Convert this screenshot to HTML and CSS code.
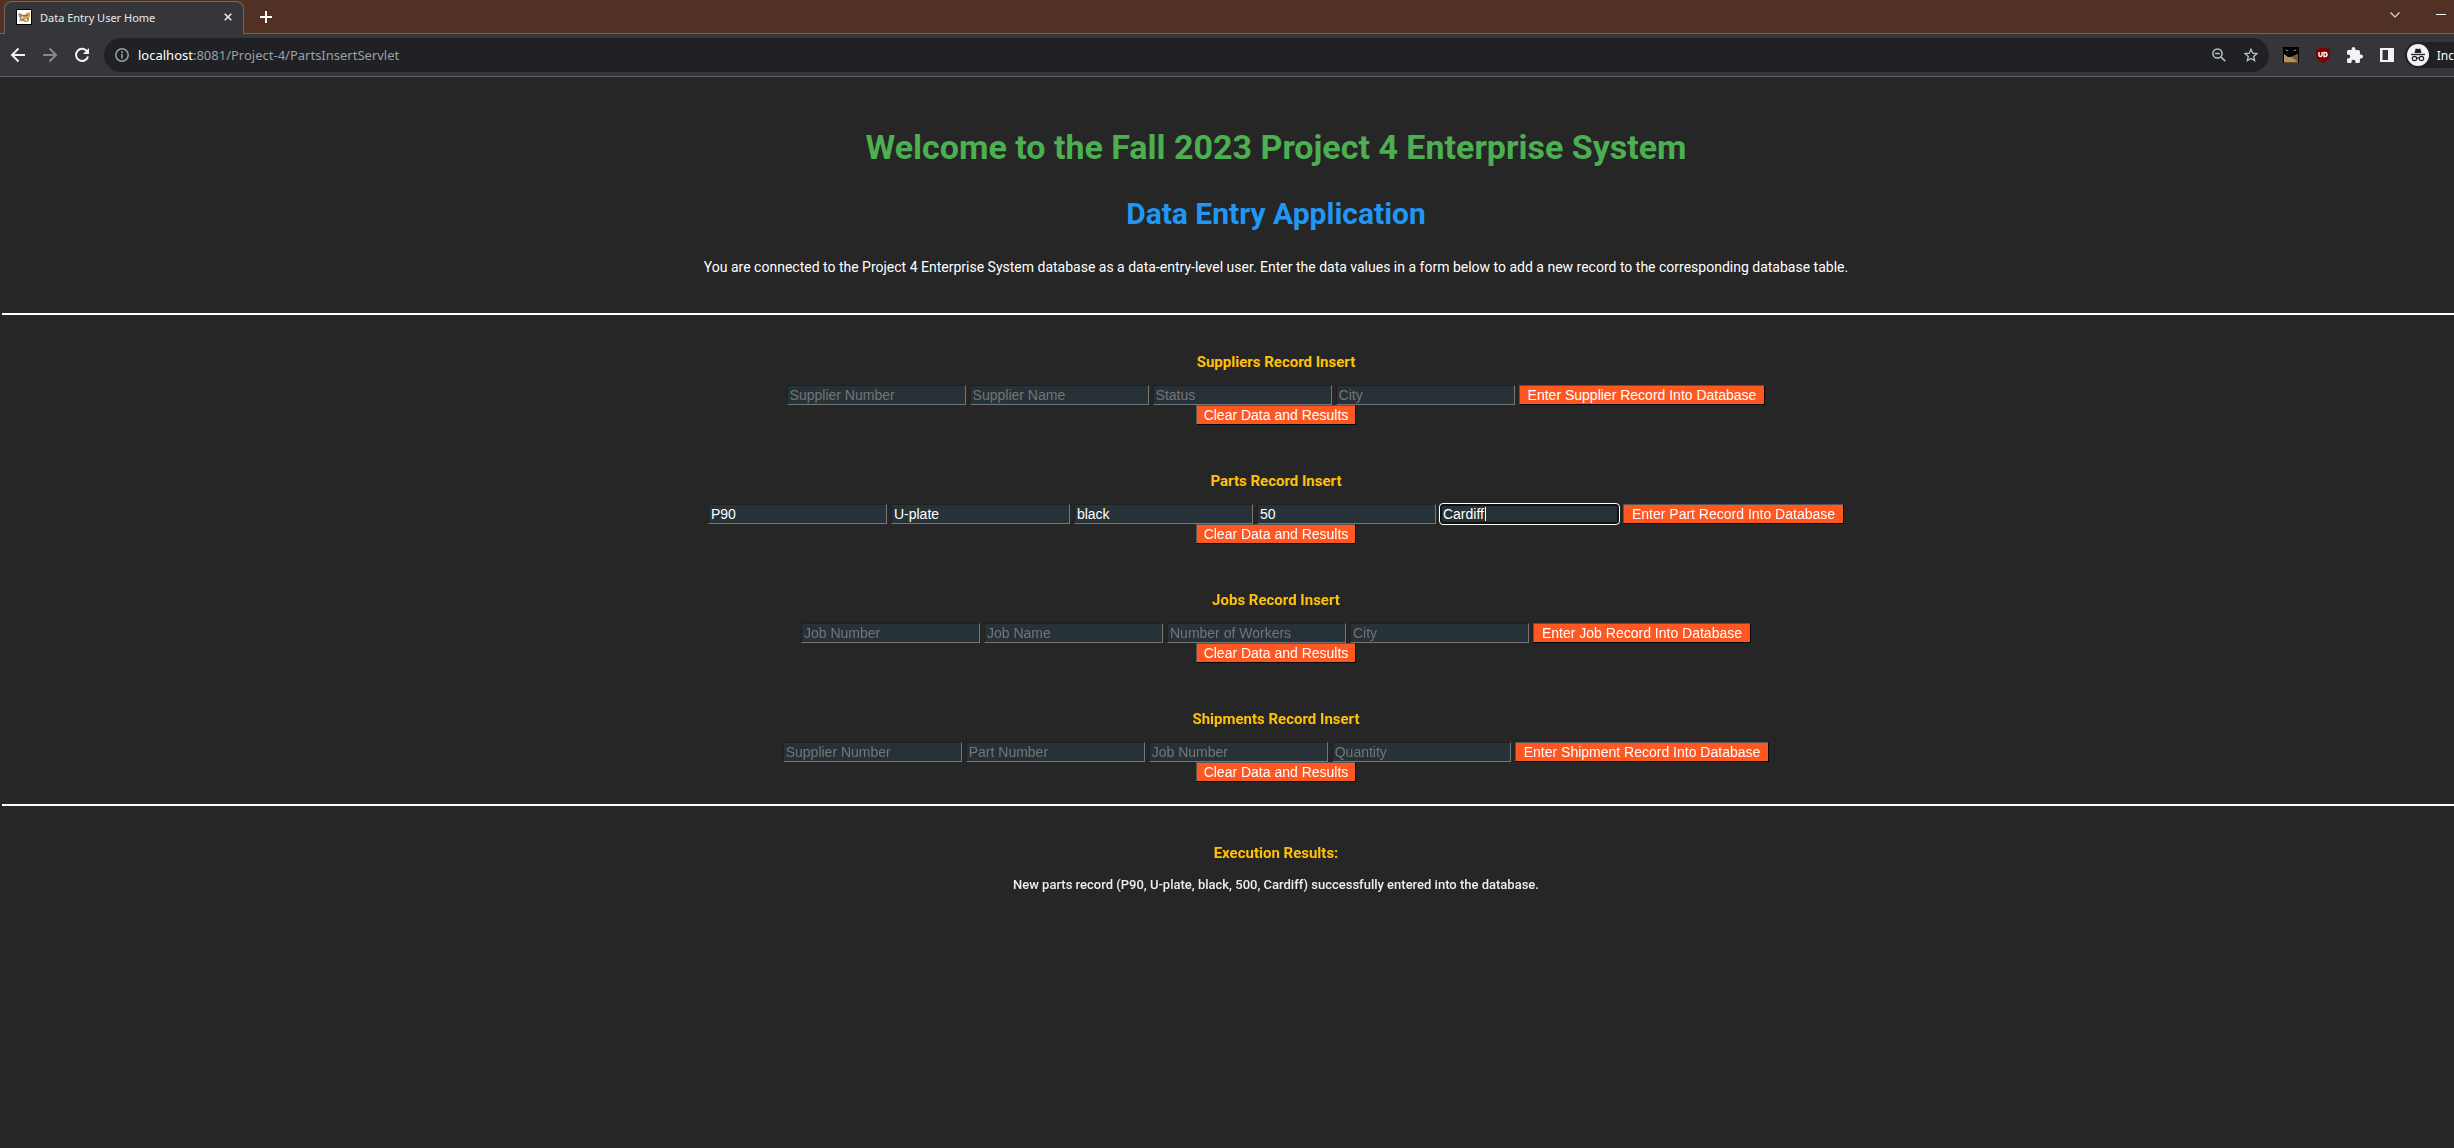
FILE: index.html
```html
<!DOCTYPE html>
<html lang="en">
<head>
<meta charset="utf-8">
<title>Data Entry User Home</title>
<link rel="stylesheet" href="styles.css">
</head>
<body>
<header class="browser">
  <div class="tabstrip">
    <div class="tab">
      <svg class="favicon" viewBox="0 0 16 16" aria-hidden="true">
        <rect x=".5" y=".5" width="15" height="15" fill="#fff" stroke="#000"/>
        <path d="M2 5l3-1 2 3-2 2 4 2 4 2H9L6 11l-3 2 1-3z" fill="#9a938a"/>
        <path d="M7 6l3-1 1-2 1 1 2-1v4l-1 2v3l-3-2-4 2-2-1 3-2z" fill="#d9a441"/>
        <path d="M6 6l3 1 3-1M5 11h3M12 9v3" stroke="#5c4a2a" fill="none" stroke-width=".7"/>
      </svg>
      <span class="tab-title">Data Entry User Home</span>
      <button class="tab-close" aria-label="Close tab"><svg viewBox="0 0 8 8"><path d="M.7.7l6.6 6.6M7.3.7L.7 7.3" stroke="#e8eaed" stroke-width="1.6"/></svg></button>
    </div>
    <button class="new-tab" aria-label="New tab"><svg viewBox="0 0 12 12"><path d="M6 0v12M0 6h12" stroke="#fff" stroke-width="2"/></svg></button>
    <div class="window-controls">
      <button aria-label="Search tabs"><svg width="10" height="6" viewBox="0 0 10 6"><path d="M.5.5L5 5 9.500.5" fill="none" stroke="#e8e0dc" stroke-width="1.1"/></svg></button>
      <button aria-label="Minimize"><svg width="10" height="2" viewBox="0 0 10 2"><path d="M0 .5h10" stroke="#fff"/></svg></button>
    </div>
  </div>
  <div class="toolbar">
    <nav class="nav-buttons">
      <button aria-label="Back"><svg width="16" height="16" viewBox="0 0 16 16"><path d="M15 8H2M8.500 1.500L2 8l6.500 6.500" fill="none" stroke="#f1f3f4" stroke-width="2"/></svg></button>
      <button aria-label="Forward"><svg width="16" height="16" viewBox="0 0 16 16"><path d="M1 8h13M7.500 1.500L14 8l-6.500 6.500" fill="none" stroke="#86888a" stroke-width="2"/></svg></button>
      <button aria-label="Reload"><svg width="16" height="16" viewBox="0 0 16 16"><path d="M13.200 4.500A6.100 6.100 0 1 0 14 9.500" fill="none" stroke="#f1f3f4" stroke-width="2"/><path d="M15 1v6H9z" fill="#f1f3f4"/></svg></button>
    </nav>
    <div class="omnibox">
      <svg width="14" height="14" viewBox="0 0 14 14"><circle cx="7" cy="7" r="6.200" fill="none" stroke="#9aa0a6" stroke-width="1.500"/><path d="M7 6v4.500M7 3.300v1.600" stroke="#9aa0a6" stroke-width="1.600"/></svg>
      <span class="url"><span class="url-host">localhost</span>:8081/Project-4/PartsInsertServlet</span>
      <button aria-label="Zoom"><svg width="14" height="14" viewBox="0 0 14 14"><circle cx="5.500" cy="5.500" r="4.600" fill="none" stroke="#bdc1c6" stroke-width="1.500"/><path d="M3.200 5.500h4.600M9 9l4.300 4.300" stroke="#bdc1c6" stroke-width="1.600"/></svg></button>
      <button aria-label="Bookmark"><svg width="14" height="14" viewBox="0 0 14 14"><path d="M7 1.300l1.700 3.900 4.200.4-3.200 2.800 1 4.200L7 10.400l-3.700 2.200 1-4.200L1.100 5.600l4.200-.4z" fill="none" stroke="#bdc1c6" stroke-width="1.300"/></svg></button>
    </div>
    <div class="extensions">
      <button aria-label="Dark mode"><svg width="16" height="16" viewBox="0 0 16 16"><path d="M0 0h16v16H0z" fill="#000"/><path d="M1 7l4 3h3l7-3v8.500H1z" fill="#b3925f"/><path d="M8 10l7-3v8z" fill="#6f5838"/><path d="M2 2l4 2H4zM14 2l-4 2h2z" fill="#c8cdd2"/></svg></button>
      <button aria-label="Ad blocker"><svg width="16" height="16" viewBox="0 0 16 16"><path d="M8 0c2 1.300 4 2 7 2v6c0 4-3 6-7 8-4-2-7-4-7-8V2c3 0 5-.7 7-2z" fill="#800000"/><path d="M4 5v3a1.500 1.500 0 0 0 3 0V5" fill="none" stroke="#fff" stroke-width="1.400"/><path d="M9 5.500v4h1a2 2 0 0 0 0-4z" fill="none" stroke="#fff" stroke-width="1.400"/></svg></button>
      <button aria-label="Extensions"><svg width="16" height="16" viewBox="2 1 21 21"><path d="M20.500 11H19V7a2 2 0 0 0-2-2h-4V3.500a2.500 2.500 0 0 0-5 0V5H4a2 2 0 0 0-2 2v3.800h1.500a2.700 2.700 0 0 1 0 5.400H2V20a2 2 0 0 0 2 2h3.800v-1.500a2.700 2.700 0 0 1 5.400 0V22H17a2 2 0 0 0 2-2v-4h1.500a2.500 2.500 0 0 0 0-5z" fill="#f1f3f4"/></svg></button>
      <button aria-label="Side panel"><svg width="16" height="16" viewBox="0 0 16 16"><path d="M1 1h14v14H1zM3.500 3v10H9V3z" fill="#f1f3f4" fill-rule="evenodd"/></svg></button>
    </div>
    <button class="incognito">
      <svg width="22" height="22" viewBox="0 0 22 22"><circle cx="11" cy="11" r="11" fill="#f1f3f4"/><path d="M7.500 9l1.200-4.500 2.300.6 2.300-.6L14.500 9z" fill="#202124"/><path d="M4 10.500h14" stroke="#202124" stroke-width="1.300"/><g fill="none" stroke="#202124" stroke-width="1.200"><circle cx="7.500" cy="14.500" r="2.200"/><circle cx="14.500" cy="14.500" r="2.200"/><path d="M9.700 14.200q1.300-.8 2.600 0"/></g></svg>
      <span>Inc</span>
    </button>
  </div>
</header>
<main class="page">
  <h1>Welcome to the Fall 2023 Project 4 Enterprise System</h1>
  <h2>Data Entry Application</h2>
  <p class="intro">You are connected to the Project 4 Enterprise System database as a data-entry-level user. Enter the data values in a form below to add a new record to the corresponding database table.</p>
  <hr>
  <form class="record">
    <h3>Suppliers Record Insert</h3>
    <div class="fields">
      <input type="text" aria-label="Supplier Number" placeholder="Supplier Number">
      <input type="text" aria-label="Supplier Name" placeholder="Supplier Name">
      <input type="text" aria-label="Status" placeholder="Status">
      <input type="text" aria-label="City" placeholder="City">
      <button type="submit">Enter Supplier Record Into Database</button>
    </div>
    <button type="reset">Clear Data and Results</button>
  </form>
  <form class="record">
    <h3>Parts Record Insert</h3>
    <div class="fields">
      <input type="text" aria-label="Part Number" value="P90">
      <input type="text" aria-label="Part Name" value="U-plate">
      <input type="text" aria-label="Color" value="black">
      <input type="text" aria-label="Weight" value="50">
      <input type="text" aria-label="City" value="Cardiff" autofocus>
      <button type="submit">Enter Part Record Into Database</button>
    </div>
    <button type="reset">Clear Data and Results</button>
  </form>
  <form class="record">
    <h3>Jobs Record Insert</h3>
    <div class="fields">
      <input type="text" aria-label="Job Number" placeholder="Job Number">
      <input type="text" aria-label="Job Name" placeholder="Job Name">
      <input type="text" aria-label="Number of Workers" placeholder="Number of Workers">
      <input type="text" aria-label="City" placeholder="City">
      <button type="submit">Enter Job Record Into Database</button>
    </div>
    <button type="reset">Clear Data and Results</button>
  </form>
  <form class="record">
    <h3>Shipments Record Insert</h3>
    <div class="fields">
      <input type="text" aria-label="Supplier Number" placeholder="Supplier Number">
      <input type="text" aria-label="Part Number" placeholder="Part Number">
      <input type="text" aria-label="Job Number" placeholder="Job Number">
      <input type="text" aria-label="Quantity" placeholder="Quantity">
      <button type="submit">Enter Shipment Record Into Database</button>
    </div>
    <button type="reset">Clear Data and Results</button>
  </form>
  <hr>
  <section class="results">
    <h3>Execution Results:</h3>
    <p>New parts record (P90, U-plate, black, 500, Cardiff) successfully entered into the database.</p>
  </section>
</main>
</body>
</html>
```
FILE: styles.css
```css
* { box-sizing: border-box; }
body {
  margin: 0;
  min-height: 100vh;
  background: #262626;
  color: #fff;
  font-family: Roboto, sans-serif;
  overflow: hidden;
}
svg { display: block; }

/* Browser chrome */
.browser { font-family: "Noto Sans", "Open Sans", sans-serif; }
.browser button { background: none; border: 0; padding: 0; color: inherit; font: inherit; }
.tabstrip {
  display: flex;
  height: 34px;
  padding: 1px 0 0 4px;
  background: #523125;
  border-bottom: 1px solid #75625a;
}
.tab {
  display: flex;
  align-items: center;
  width: 240px;
  height: 33px;
  margin-bottom: -1px;
  padding: 0 11px 2px;
  background: #35363a;
  border: 1px solid #806459;
  border-bottom: 0;
  border-radius: 8px 8px 0 0;
  flex: none;
}
.favicon { width: 16px; height: 16px; }
.tab-title { flex: 1; margin-left: 8px; font-size: 11px; color: #e8eaed; white-space: nowrap; }
.tab-close svg { width: 8px; height: 8px; }
.new-tab { margin-left: 16px; }
.new-tab svg { width: 12px; height: 12px; }
.window-controls { display: flex; align-items: center; gap: 36px; margin-left: auto; padding: 0 8px 4px 0; }
.toolbar {
  display: flex;
  align-items: center;
  height: 43px;
  padding-left: 10px;
  background: #35363a;
  border-bottom: 1px solid #5f6064;
}
.nav-buttons { display: flex; gap: 16px; }
.omnibox {
  flex: 1;
  display: flex;
  align-items: center;
  height: 34px;
  margin-left: 14px;
  padding: 0 11px;
  border-radius: 17px;
  background: #202124;
}
.url { flex: 1; margin-left: 9px; font-size: 13px; color: #9aa0a6; }
.url-host { color: #fff; }
.omnibox button { margin-left: 18px; }
.extensions { display: flex; gap: 16px; margin-left: 14px; }
.browser .incognito {
  display: flex;
  align-items: center;
  gap: 8px;
  height: 26px;
  margin-left: 10px;
  padding-left: 2px;
  background: #202124;
  border-radius: 13px 0 0 13px;
  font-size: 12px;
  white-space: nowrap;
}
.incognito svg { flex: none; }

/* The page runs on past the right edge of the window */
.page { margin: 0 -96px 0 2px; text-align: center; }
h1, h2, h3, p { margin: 0; }
h1 { padding-top: 48px; font-size: 34px; line-height: 44px; color: #4caf50; }
h2 { padding-top: 25px; font-size: 30px; line-height: 40px; color: #2196f3; }
.intro { padding: 23px 0 36px; font-size: 14px; line-height: 20px; }
hr { height: 2px; margin: 0; border: 0; background: #fff; }
h3 { font-size: 15px; line-height: 20px; color: #ffc107; }
.record { padding-top: 37px; height: 119px; }
.record:last-of-type { height: 132px; }
.fields { display: flex; justify-content: center; gap: 4px; margin-top: 13px; }
.fields input {
  width: 179px;
  height: 20px;
  padding: 1px 2px;
  border: 1px solid;
  border-color: #202020 #767676 #767676 #202020;
  background: #263238;
  color: #fff;
  font: 14px "Liberation Sans", Arial, sans-serif;
}
.fields input::placeholder { color: #757575; }
.fields input:focus {
  border: 2px solid #101010;
  border-radius: 3px;
  padding: 0 1px;
  outline: 1px solid #fff;
  /* steady insertion mark after the typed text */
  caret-color: transparent;
  background: linear-gradient(#fff, #fff) 43px 1px / 1px 14px no-repeat #263238;
}
.record button {
  height: 20px;
  padding: 0 7px;
  border: 1px solid;
  border-color: #555 #000 #000 #555;
  background: #ff5722;
  color: #fff;
  font: 14px/18px "Liberation Sans", Arial, sans-serif;
}
.record .fields button { padding: 0 8px; }
.record > button { display: block; margin: 0 auto; }
.results { padding-top: 37px; }
.results p { margin-top: 12px; font-size: 13px; line-height: 20px; font-weight: 500; color: #eee; }
```
